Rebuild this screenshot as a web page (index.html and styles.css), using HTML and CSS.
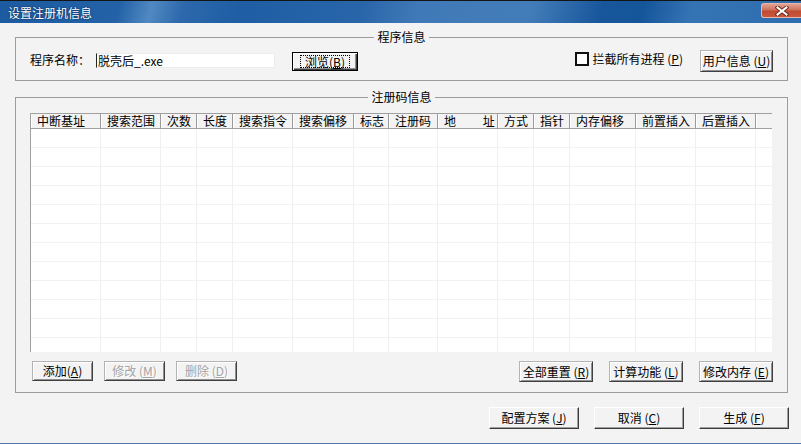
FILE: index.html
```html
<!DOCTYPE html>
<html lang="zh-CN">
<head>
<meta charset="utf-8">
<title>设置注册机信息</title>
<link rel="stylesheet" href="styles.css">
</head>
<body>
<div class="window">
  <div class="titlebar">
    <span class="title">设置注册机信息</span>
    <div class="close">
      <svg width="14" height="10" viewBox="0 0 14 10">
        <path d="M2.5 1.5 L11.5 8.5 M11.5 1.5 L2.5 8.5" stroke="#6a2a1c" stroke-width="4" stroke-linecap="square" fill="none"/>
        <path d="M2.5 1.5 L11.5 8.5 M11.5 1.5 L2.5 8.5" stroke="#ffffff" stroke-width="2" stroke-linecap="square" fill="none"/>
      </svg>
    </div>
  </div>
  <div class="client">
    <fieldset class="group g1">
      <legend>程序信息</legend>
      <div class="row">
        <span class="label">程序名称：</span>
        <div class="input">脱壳后_.exe</div>
        <button class="btn default browse"><span class="focus">浏览(<u>B</u>)</span></button>
        <div class="spacer"></div>
        <label class="check"><span class="box"></span>拦截所有进程 (<u>P</u>)</label>
        <button class="btn user">用户信息 (<u>U</u>)</button>
      </div>
    </fieldset>
    <fieldset class="group g2">
      <legend>注册码信息</legend>
      <div class="list">
        <div class="lhead">
          <div class="hc w70">中断基址</div>
          <div class="hc w60">搜索范围</div>
          <div class="hc w36">次数</div>
          <div class="hc w36">长度</div>
          <div class="hc w60">搜索指令</div>
          <div class="hc w61">搜索偏移</div>
          <div class="hc w35">标志</div>
          <div class="hc w49">注册码</div>
          <div class="hc w60">地　　 址</div>
          <div class="hc w36">方式</div>
          <div class="hc w36">指针</div>
          <div class="hc w66">内存偏移</div>
          <div class="hc w60">前置插入</div>
          <div class="hc w60">后置插入</div>
          <div class="hc w16"></div>
        </div>
        <div class="lbody">
          <div class="bc w70"></div>
          <div class="bc w60"></div>
          <div class="bc w36"></div>
          <div class="bc w36"></div>
          <div class="bc w60"></div>
          <div class="bc w61"></div>
          <div class="bc w35"></div>
          <div class="bc w49"></div>
          <div class="bc w60"></div>
          <div class="bc w36"></div>
          <div class="bc w36"></div>
          <div class="bc w66"></div>
          <div class="bc w60"></div>
          <div class="bc w60"></div>
          <div class="bc w16"></div>
        </div>
      </div>
      <div class="btnrow">
        <button class="btn small">添加(<u>A</u>)</button>
        <button class="btn small" disabled>修改 (<u>M</u>)</button>
        <button class="btn small" disabled>删除 (<u>D</u>)</button>
        <div class="spacer"></div>
        <button class="btn wide">全部重置 (<u>R</u>)</button>
        <button class="btn wide">计算功能 (<u>L</u>)</button>
        <button class="btn wide">修改内存 (<u>E</u>)</button>
      </div>
    </fieldset>
    <div class="footer">
      <button class="fbtn">配置方案 (<u>J</u>)</button>
      <button class="fbtn">取消 (<u>C</u>)</button>
      <button class="fbtn">生成 (<u>F</u>)</button>
    </div>
  </div>
</div>
</body>
</html>
```

FILE: styles.css
```css
* { box-sizing: border-box; }
html, body { margin: 0; padding: 0; }
body {
  width: 801px;
  height: 444px;
  overflow: hidden;
  background: #f3f3f3;
  font-family: "Noto Sans CJK SC", "DejaVu Sans", sans-serif;
  font-size: 12px;
  color: #000;
}
.window {
  height: 444px;
  display: flex;
  flex-direction: column;
  border-bottom: 1px solid #4a7aab;
}

/* title bar */
.titlebar {
  height: 23px;
  flex: none;
  border-top: 1px solid #151515;
  background: linear-gradient(105deg,
    #1d5ba0 0%, #2462a7 15%, #5089c2 19%, #2c68ab 23%, #1f5ea4 30%,
    #2865a9 45%, #4079b7 52%, #437db9 66%, #17569b 75%, #15559a 80%,
    #3574b4 86%, #2d6daf 100%);
  display: flex;
  align-items: flex-start;
  justify-content: space-between;
  padding-left: 8px;
}
.title {
  color: #fff;
  font-size: 12px;
  line-height: 14px;
  margin-top: 5px;
  text-shadow: 0 0 2px #0a2c5c, 0 0 1px #0a2c5c;
}
.close {
  width: 40px;
  height: 15px;
  margin-top: 2px;
  border: 1px solid #e9b5a8;
  border-right: none;
  border-radius: 3px 0 0 3px;
  background: linear-gradient(to bottom, #e3a393 0%, #d0705a 45%, #c04a31 55%, #c9583d 100%);
  display: flex;
  align-items: center;
  justify-content: center;
}

/* client area */
.client {
  flex: 1;
  display: flex;
  flex-direction: column;
  padding: 7px 13px 0 15px;
}
.group {
  margin: 0;
  padding: 0 14px 0 14px;
  border: 1px solid #9c9c9c;
  min-width: 0;
}
.group legend {
  margin: 0 auto;
  padding: 0 3px;
  font-size: 12px;
  line-height: 14px;
}
.g1 { height: 51px; flex: none; }
.g2 { height: 303px; margin-top: 9px; flex: none; }

.row {
  display: flex;
  align-items: center;
  height: 22px;
  margin-top: 6px;
}
.label { line-height: 14px; margin-right: 6px; margin-bottom: 2px; }
.input {
  width: 179px;
  height: 15px;
  background: #fff;
  border: 1px solid #ececec;
  border-left: 1px solid #222;
  line-height: 13px;
  padding-left: 1px;
  white-space: pre;
  margin-bottom: 1px;
}
.spacer { flex: 1; }

.btn {
  font: inherit;
  color: #000;
  background: #f3f3f3;
  border: 1px solid;
  border-color: #b4b4b4 #404040 #404040 #b4b4b4;
  box-shadow: inset 1px 1px #fff, inset -1px -1px #909090;
  padding: 0;
  line-height: 14px;
  display: flex;
  align-items: center;
  justify-content: center;
  white-space: pre;
}
.btn:disabled {
  color: #a3a3a3;
  text-shadow: 1px 1px #fff;
}
.btn u { text-underline-offset: 1px; }
.browse {
  width: 66px;
  height: 19px;
  margin-left: 17px;
  border: 1px solid #000;
  box-shadow: inset 1px 1px #fff, inset -1px -1px #404040, inset -2px -2px #909090;
}
.browse .focus {
  border: 1px dotted #000;
  padding: 0 4px;
  line-height: 11px;
}
.check {
  display: flex;
  align-items: center;
  line-height: 14px;
  margin-bottom: 4px;
  margin-right: 17px;
  white-space: pre;
}
.box {
  width: 14px;
  height: 14px;
  border: 2px solid #111;
  background: #fff;
  margin-right: 4px;
}
.user { width: 73px; height: 22px; }

/* list view */
.list {
  margin-top: 9px;
  width: 742px;
  height: 239px;
  border-left: 1px solid #a0a0a0;
  background: #fff;
  display: flex;
  flex-direction: column;
  overflow: hidden;
}
.lhead {
  display: flex;
  flex: none;
  height: 16px;
  border-top: 1px solid #a0a0a0;
  border-bottom: 1px solid #a0a0a0;
  background: #f3f3f3;
}
.hc {
  flex: none;
  border-right: 1px solid #9a9a9a;
  box-shadow: inset 1px 0 #fff;
  padding-left: 6px;
  font-size: 12px;
  line-height: 14px;
  white-space: pre;
}
.hc:last-child { border-right: none; }
.lbody {
  flex: 1;
  display: flex;
  background: repeating-linear-gradient(to bottom, #fff 0 18px, #f2f2f2 18px 19px);
}
.bc { flex: none; border-right: 1px solid #f0f0f0; }
.bc:last-child { border-right: none; }
.w70 { width: 70px; }
.w60 { width: 60px; }
.w36 { width: 36px; }
.w61 { width: 61px; }
.w35 { width: 35px; }
.w49 { width: 49px; }
.w66 { width: 66px; }
.w16 { width: 16px; }

.btnrow {
  display: flex;
  align-items: flex-start;
  margin-top: 9px;
  padding-left: 2px;
}
.small { width: 61px; height: 20px; margin-right: 11px; }
.wide { width: 74px; height: 21px; margin-left: 16px; }

/* footer */
.footer {
  display: flex;
  justify-content: flex-end;
  gap: 15px;
  margin-top: 14px;
  margin-right: -1px;
}
.fbtn {
  font: inherit;
  color: #000;
  width: 90px;
  height: 22px;
  padding: 0;
  background: #f3f3f3;
  border: 1px solid;
  border-color: #fff #3c3c3c #3c3c3c #fff;
  box-shadow: inset -1px -1px #a0a0a0;
  line-height: 14px;
  white-space: pre;
}
```
